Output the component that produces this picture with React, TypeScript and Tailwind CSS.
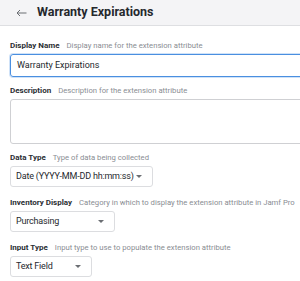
const font = { fontFamily: 'Roboto, "Liberation Sans", Arial, sans-serif' };

function Label({ name, hint }: { name: string; hint: string }) {
  return (
    <div className="flex items-baseline gap-[7px] h-[10px] leading-[10px] whitespace-nowrap">
      <span className="text-[8px] font-bold text-[#2b2e33]">{name}</span>
      <span className="text-[7.7px] text-[#8a8d93]">{hint}</span>
    </div>
  );
}

function Select({ value, width }: { value: string; width: string }) {
  return (
    <div
      className={`${width} h-[21px] mt-[3px] flex items-center justify-between pl-[5px] pr-[10px] border border-[#dcdde0] rounded-[3px] bg-white text-[9px] tracking-[-0.2px] text-[#26292e] whitespace-nowrap`}
    >
      <span>{value}</span>
      <span className="w-0 h-0 border-l-[3px] border-r-[3px] border-t-[3px] border-l-transparent border-r-transparent border-t-[#6b6e73]" />
    </div>
  );
}

export default function App() {
  return (
    <div className="w-[300px] h-[281px] overflow-hidden bg-white" style={font}>
      <div className="h-[26px] bg-[#f4f4f6] border-b border-[#dedfe2] flex items-center pl-[16px]">
        <svg width="11" height="8" viewBox="0 0 11 8" fill="none" stroke="#6b6e73" strokeWidth="1">
          <path d="M10.5 4H1M4 1L1 4l3 3" />
        </svg>
        <h1 className="ml-[10px] text-[12.5px] font-bold text-[#25282d]">Warranty Expirations</h1>
      </div>

      <div className="pl-[10px] pt-[15px]">
        <Label name="Display Name" hint="Display name for the extension attribute" />
        <div className="w-[340px] h-[23px] mt-[3px] flex items-center pl-[6px] border-[1.5px] border-[#4a8fe0] rounded-[3px] shadow-[0_0_0_1px_#cfe2f8] text-[9px] text-[#26292e]">
          Warranty Expirations
        </div>

        <div className="mt-[9px]">
          <Label name="Description" hint="Description for the extension attribute" />
        </div>
        <div className="w-[340px] h-[45px] mt-[3px] border border-[#cfd0d3] rounded-[3px]" />

        <div className="mt-[9px]">
          <Label name="Data Type" hint="Type of data being collected" />
        </div>
        <Select value="Date (YYYY-MM-DD hh:mm:ss)" width="w-[143px]" />

        <div className="mt-[11px]">
          <Label name="Inventory Display" hint="Category in which to display the extension attribute in Jamf Pro" />
        </div>
        <Select value="Purchasing" width="w-[105px]" />

        <div className="mt-[11px]">
          <Label name="Input Type" hint="Input type to use to populate the extension attribute" />
        </div>
        <Select value="Text Field" width="w-[82px]" />
      </div>
    </div>
  );
}
